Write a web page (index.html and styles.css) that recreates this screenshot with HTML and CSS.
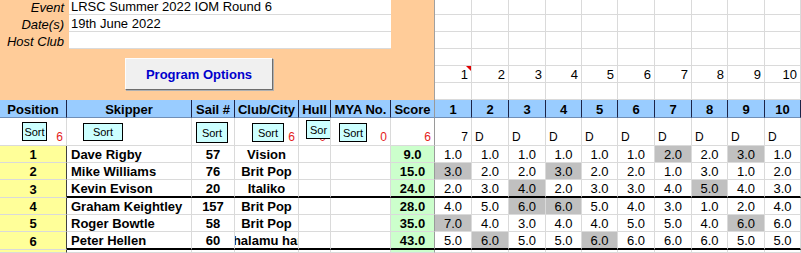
FILE: index.html
```html
<!DOCTYPE html>
<html lang="en">
<head>
  <meta charset="UTF-8" />
  <title>LRSC Summer 2022 IOM Round 6</title>
  <link rel="stylesheet" href="styles.css">
</head>
<body>

<div class="sheet">
  <!-- event details block -->
  <div class="event-box">
    <div class="label">Event</div><div class="field">LRSC Summer 2022 IOM Round 6</div>
    <div class="label">Date(s)</div><div class="field">19th June 2022</div>
    <div class="label">Host Club</div><div class="field"></div>
    <button class="options-btn">Program Options</button>
  </div>

  <!-- empty grid to the right of the event block -->
  <div class="c"></div><div class="c"></div><div class="c"></div><div class="c"></div><div class="c"></div><div class="c"></div><div class="c"></div><div class="c"></div><div class="c"></div><div class="c"></div>
  <div class="c"></div><div class="c"></div><div class="c"></div><div class="c"></div><div class="c"></div><div class="c"></div><div class="c"></div><div class="c"></div><div class="c"></div><div class="c"></div>
  <div class="c"></div><div class="c"></div><div class="c"></div><div class="c"></div><div class="c"></div><div class="c"></div><div class="c"></div><div class="c"></div><div class="c"></div><div class="c"></div>
  <div class="c"></div><div class="c"></div><div class="c"></div><div class="c"></div><div class="c"></div><div class="c"></div><div class="c"></div><div class="c"></div><div class="c"></div><div class="c"></div>
  <div class="c r note">1</div><div class="c r">2</div><div class="c r">3</div><div class="c r">4</div><div class="c r">5</div><div class="c r">6</div><div class="c r">7</div><div class="c r">8</div><div class="c r">9</div><div class="c r">10</div>
  <div class="c"></div><div class="c"></div><div class="c"></div><div class="c"></div><div class="c"></div><div class="c"></div><div class="c"></div><div class="c"></div><div class="c"></div><div class="c"></div>

  <!-- header -->
  <div class="c hd">Position</div><div class="c hd">Skipper</div><div class="c hd">Sail #</div><div class="c hd">Club/City</div><div class="c hd">Hull</div><div class="c hd">MYA No.</div><div class="c hd edge">Score</div>
  <div class="c hd">1</div><div class="c hd">2</div><div class="c hd">3</div><div class="c hd">4</div><div class="c hd">5</div><div class="c hd">6</div><div class="c hd">7</div><div class="c hd">8</div><div class="c hd">9</div><div class="c hd">10</div>

  <!-- sort controls -->
  <div class="c so r red"><span class="sort sort-pos">Sort</span>6</div>
  <div class="c so"><span class="sort sort-skip">Sort</span></div>
  <div class="c so"><span class="sort sort-sail">Sort</span></div>
  <div class="c so r red"><span class="sort sort-club">Sort</span>6</div>
  <div class="c so r red hull">0<span class="sort sort-hull">Sor</span></div>
  <div class="c so r red"><span class="sort sort-mya">Sort</span>0</div>
  <div class="c so r red edge">6</div>
  <div class="c so r">7</div><div class="c so l">D</div><div class="c so l">D</div><div class="c so l">D</div><div class="c so l">D</div><div class="c so l">D</div><div class="c so l">D</div><div class="c so l">D</div><div class="c so l">D</div><div class="c so l">D</div>

  <!-- results -->
  <div class="c pos">1</div><div class="c nm">Dave Rigby</div><div class="c v b">57</div><div class="c v b">Vision</div><div class="c"></div><div class="c"></div><div class="c sc edge">9.0</div>
  <div class="c v">1.0</div><div class="c v">1.0</div><div class="c v">1.0</div><div class="c v">1.0</div><div class="c v">1.0</div><div class="c v">1.0</div><div class="c v d">2.0</div><div class="c v">2.0</div><div class="c v d">3.0</div><div class="c v">1.0</div>

  <div class="c pos">2</div><div class="c nm">Mike Williams</div><div class="c v b">76</div><div class="c v b">Brit Pop</div><div class="c"></div><div class="c"></div><div class="c sc edge">15.0</div>
  <div class="c v d">3.0</div><div class="c v">2.0</div><div class="c v">2.0</div><div class="c v d">3.0</div><div class="c v">2.0</div><div class="c v">2.0</div><div class="c v">1.0</div><div class="c v">3.0</div><div class="c v">1.0</div><div class="c v">2.0</div>

  <div class="c pos">3</div><div class="c nm k">Kevin Evison</div><div class="c v b k">20</div><div class="c v b k">Italiko</div><div class="c k"></div><div class="c k"></div><div class="c sc edge k">24.0</div>
  <div class="c v k">2.0</div><div class="c v k">3.0</div><div class="c v d k">4.0</div><div class="c v k">2.0</div><div class="c v k">3.0</div><div class="c v k">3.0</div><div class="c v k">4.0</div><div class="c v d k">5.0</div><div class="c v k">4.0</div><div class="c v k">3.0</div>

  <div class="c pos">4</div><div class="c nm">Graham Keightley</div><div class="c v b">157</div><div class="c v b">Brit Pop</div><div class="c"></div><div class="c"></div><div class="c sc edge">28.0</div>
  <div class="c v">4.0</div><div class="c v">5.0</div><div class="c v d">6.0</div><div class="c v d">6.0</div><div class="c v">5.0</div><div class="c v">4.0</div><div class="c v">3.0</div><div class="c v">1.0</div><div class="c v">2.0</div><div class="c v">4.0</div>

  <div class="c pos">5</div><div class="c nm">Roger Bowtle</div><div class="c v b">58</div><div class="c v b">Brit Pop</div><div class="c"></div><div class="c"></div><div class="c sc edge">35.0</div>
  <div class="c v d">7.0</div><div class="c v">4.0</div><div class="c v">3.0</div><div class="c v">4.0</div><div class="c v">4.0</div><div class="c v">5.0</div><div class="c v">5.0</div><div class="c v">4.0</div><div class="c v d">6.0</div><div class="c v">6.0</div>

  <div class="c pos">6</div><div class="c nm k">Peter Hellen</div><div class="c v b k">60</div><div class="c v b k">Chalamu hara</div><div class="c k"></div><div class="c k"></div><div class="c sc edge k">43.0</div>
  <div class="c v k">5.0</div><div class="c v d k">6.0</div><div class="c v k">5.0</div><div class="c v k">5.0</div><div class="c v d k">6.0</div><div class="c v k">6.0</div><div class="c v k">6.0</div><div class="c v k">6.0</div><div class="c v k">5.0</div><div class="c v k">5.0</div>

  <div class="c pos"></div><div class="c"></div><div class="c"></div><div class="c"></div><div class="c"></div><div class="c"></div><div class="c sc edge"></div>
  <div class="c"></div><div class="c"></div><div class="c"></div><div class="c"></div><div class="c"></div><div class="c"></div><div class="c"></div><div class="c"></div><div class="c"></div><div class="c"></div>
</div>

</body>
</html>
```

FILE: styles.css
```css
body {
  margin: 0;
  font-family: "Liberation Sans", Arial, sans-serif;
  font-size: 13px;
  color: #000;
  background: #fff;
}
.sheet {
  display: grid;
  width: 801px;
  grid-template-columns: 67px 125px 43px 64px 32px 60px 44px 37px 37px 37px 36px 36px 37px 37px 36px 37px 36px;
  grid-template-rows: 15px 17px 17px 17px 17px 17px 18px 28px 17px 17px 18px 17px 17px 18px 3px;
}
.c {
  box-sizing: border-box;
  display: flex;
  align-items: flex-end;
  overflow: hidden;
  white-space: nowrap;
  line-height: 15px;
  border-right: 1px solid #dadada;
  border-bottom: 1px solid #dadada;
}
.r { justify-content: flex-end; padding-right: 3px; }
.l { padding-left: 3px; }
.v { justify-content: center; }
.b { font-weight: bold; }

/* event block */
.event-box {
  grid-column: 1 / 8;
  grid-row: 1 / 7;
  background: #ffcc99;
  border-right: 1px solid #a0a0a0;
  box-sizing: border-box;
  display: grid;
  grid-template-columns: 69px 322px;
  grid-template-rows: 15px 17px 17px;
  align-content: start;
}
.label {
  display: flex;
  justify-content: flex-end;
  align-items: flex-end;
  padding-right: 5px;
  font-style: italic;
  line-height: 15px;
}
.field {
  box-sizing: border-box;
  display: flex;
  align-items: flex-end;
  background: #fff;
  padding-left: 2px;
  line-height: 15px;
  border-bottom: 1px solid #dadada;
}
.options-btn {
  grid-column: 1 / -1;
  justify-self: start;
  margin: 9px 0 0 125px;
  width: 148px;
  height: 32px;
  background: #f0f0f0;
  border: 1px solid;
  border-color: #fdfdfd #6d6d6d #6d6d6d #fdfdfd;
  box-shadow: 1px 1px 0 #b0b0b0;
  color: #0000cc;
  font-family: "Liberation Sans", Arial, sans-serif;
  font-size: 13px;
  font-weight: bold;
  padding: 0;
}

/* comment marker */
.note { position: relative; }
.note::after {
  content: "";
  position: absolute;
  top: 0;
  right: 0;
  border-top: 5px solid #e00000;
  border-left: 5px solid transparent;
}

/* header row */
.hd {
  background: #99ccff;
  font-weight: bold;
  justify-content: center;
  border-right-color: #1c2448;
  border-bottom-color: #6f8fb8;
}

/* sort row */
.so {
  position: relative;
  font-size: 12px;
  line-height: 14px;
  padding-bottom: 1px;
}
.red { color: #e41b1b; }
.sort {
  position: absolute;
  box-sizing: border-box;
  display: flex;
  align-items: center;
  justify-content: center;
  background: #ccffff;
  border: 1px solid #000;
  color: #000;
  font-size: 11px;
  overflow: hidden;
}
.sort-pos { left: 22px; top: 4px; width: 25px; height: 19px; }
.sort-skip { left: 16px; top: 5px; width: 40px; height: 18px; }
.sort-sail { left: 4px; top: 4px; width: 32px; height: 21px; }
.sort-club { left: 17px; top: 5px; width: 32px; height: 19px; }
.sort-hull { left: 7px; top: 2px; width: 25px; height: 19px; justify-content: flex-start; padding-left: 3px; }
.sort-mya { left: 8px; top: 5px; width: 28px; height: 19px; }
.hull { padding-right: 4px; }

/* results */
.pos {
  background: #ffff99;
  font-weight: bold;
  justify-content: center;
  border-right-color: #404040;
}
.nm { font-weight: bold; padding-left: 4px; }
.sc {
  background: #ccffcc;
  font-weight: bold;
  justify-content: center;
}
.edge { border-right-color: #9a9a9a; }
.d { background: #c0c0c0; }
.k { border-bottom: 2px solid #000; }
```
